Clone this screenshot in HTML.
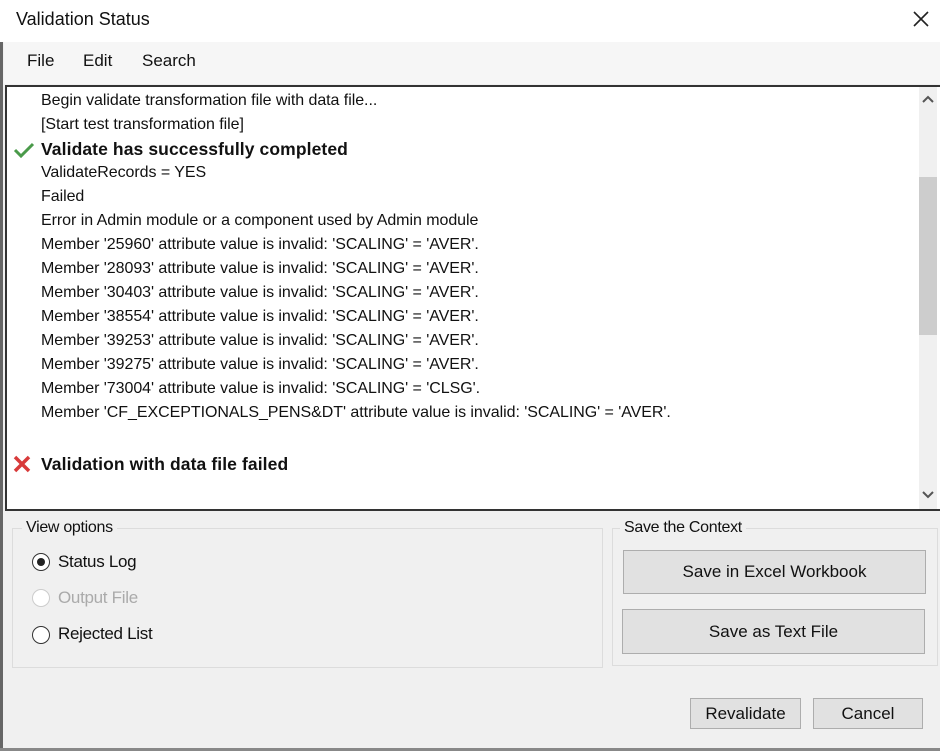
<!DOCTYPE html>
<html><head><style>
body{margin:0;width:940px;height:751px;background:#f0f0f0;position:relative;overflow:hidden;font-family:"Liberation Sans",sans-serif;color:#111}
.a{position:absolute}
.title{left:0;top:0;width:940px;height:42px;background:#fff}
.menu{left:4px;top:42px;width:936px;height:42px;background:#f6f6f6}
.log{left:5px;top:85px;width:935px;height:422px;background:#fff;border-top:2px solid #333;border-bottom:2px solid #333;border-left:2px solid #333}
.line{position:absolute;left:34px;font-size:16px;letter-spacing:-0.05px;white-space:nowrap}
.b{font-weight:bold;font-size:17.5px;letter-spacing:0.1px}
.grp{border:1px solid #dcdcdc}
.btn{background:#e1e1e1;border:1px solid #adadad;font-size:17px;text-align:center;box-sizing:border-box}
.radio{width:18px;height:18px;border:1.5px solid #333;border-radius:50%;box-sizing:border-box;background:#fff}
.lbl{font-size:17px;letter-spacing:-0.3px}
</style></head><body>
<div class="a" style="left:0;top:0;width:3px;height:751px;background:#666"></div>
<div class="a title"></div>
<div class="a" style="left:16px;top:9px;font-size:18px">Validation Status</div>
<svg class="a" style="left:912px;top:10px" width="18" height="18"><path d="M2 2L16 16M16 2L2 16" stroke="#222" stroke-width="1.6"/></svg>
<div class="a menu"></div>
<div class="a" style="left:27px;top:51px;font-size:17px">File</div>
<div class="a" style="left:83px;top:51px;font-size:17px">Edit</div>
<div class="a" style="left:142px;top:51px;font-size:17px">Search</div>
<div class="a log">
<div class="line" style="top:5px">Begin validate transformation file with data file...</div>
<div class="line" style="top:29px">[Start test transformation file]</div>
<svg class="a" style="left:6px;top:54px" width="22" height="18"><path d="M2 9L8 15L20 3" stroke="#4a9a4a" stroke-width="3" fill="none"/></svg>
<div class="line b" style="top:52px">Validate has successfully completed</div>
<div class="line" style="top:77px">ValidateRecords = YES</div>
<div class="line" style="top:101px">Failed</div>
<div class="line" style="top:125px">Error in Admin module or a component used by Admin module</div>
<div class="line" style="top:149px">Member '25960' attribute value is invalid: 'SCALING' = 'AVER'.</div>
<div class="line" style="top:173px">Member '28093' attribute value is invalid: 'SCALING' = 'AVER'.</div>
<div class="line" style="top:197px">Member '30403' attribute value is invalid: 'SCALING' = 'AVER'.</div>
<div class="line" style="top:221px">Member '38554' attribute value is invalid: 'SCALING' = 'AVER'.</div>
<div class="line" style="top:245px">Member '39253' attribute value is invalid: 'SCALING' = 'AVER'.</div>
<div class="line" style="top:269px">Member '39275' attribute value is invalid: 'SCALING' = 'AVER'.</div>
<div class="line" style="top:293px">Member '73004' attribute value is invalid: 'SCALING' = 'CLSG'.</div>
<div class="line" style="top:317px">Member 'CF_EXCEPTIONALS_PENS&amp;DT' attribute value is invalid: 'SCALING' = 'AVER'.</div>
<svg class="a" style="left:5px;top:368px" width="20" height="18"><path d="M3 2L17 16M17 2L3 16" stroke="#d83a3a" stroke-width="3.5"/></svg>
<div class="line b" style="top:367px">Validation with data file failed</div>
<div class="a" style="left:912px;top:0;width:18px;height:422px;background:#f0f0f0"></div>
<div class="a" style="left:912px;top:90px;width:18px;height:158px;background:#cdcdcd"></div>
<svg class="a" style="left:915px;top:8px" width="12" height="8"><path d="M1 7L6 2L11 7" stroke="#555" stroke-width="2" fill="none"/></svg>
<svg class="a" style="left:915px;top:404px" width="12" height="8"><path d="M1 1L6 6L11 1" stroke="#555" stroke-width="2" fill="none"/></svg>
</div>
<div class="a grp" style="left:12px;top:528px;width:589px;height:138px"></div>
<div class="a lbl" style="left:22px;top:519px;padding:0 4px;background:#f0f0f0;font-size:16px">View options</div>
<div class="a radio" style="left:32px;top:553px"></div>
<div class="a" style="left:37px;top:558px;width:8px;height:8px;border-radius:50%;background:#222"></div>
<div class="a lbl" style="left:58px;top:552px">Status Log</div>
<div class="a radio" style="left:32px;top:589px;border-color:#ccc"></div>
<div class="a lbl" style="left:58px;top:588px;color:#aaa">Output File</div>
<div class="a radio" style="left:32px;top:626px"></div>
<div class="a lbl" style="left:58px;top:624px">Rejected List</div>
<div class="a grp" style="left:612px;top:528px;width:324px;height:136px"></div>
<div class="a lbl" style="left:620px;top:519px;padding:0 4px;background:#f0f0f0;font-size:16px">Save the Context</div>
<div class="a btn" style="left:623px;top:550px;width:303px;height:44px;line-height:42px">Save in Excel Workbook</div>
<div class="a btn" style="left:622px;top:609px;width:303px;height:45px;line-height:43px">Save as Text File</div>
<div class="a btn" style="left:690px;top:698px;width:111px;height:31px;line-height:29px">Revalidate</div>
<div class="a btn" style="left:813px;top:698px;width:110px;height:31px;line-height:29px">Cancel</div>
<div class="a" style="left:0;top:748px;width:940px;height:3px;background:#888"></div>
</body></html>
